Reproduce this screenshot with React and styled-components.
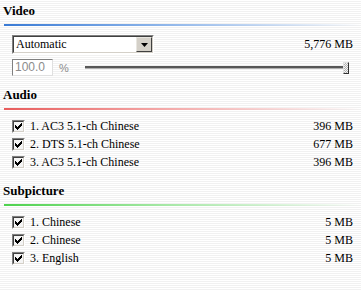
import React from "react";
import styled, { createGlobalStyle } from "styled-components";

const Global = createGlobalStyle`
  html, body { margin: 0; padding: 0; }
  body {
    background: #fff;
  }
`;

const SERIF = `"Liberation Serif", "Times New Roman", serif`;

const Page = styled.div`
  width: 361px;
  height: 290px;
  box-sizing: border-box;
  overflow: hidden;
  font-family: ${SERIF};
  background: repeating-linear-gradient(
    to bottom,
    #ffffff 0px,
    #ffffff 1px,
    #f1f1f1 1px,
    #f1f1f1 2px
  );
  display: flex;
  flex-direction: column;
`;

const Section = styled.section`
  display: flex;
  flex-direction: column;
  height: ${(p) => p.$h}px;
`;

const Header = styled.div`
  height: 27px;
  padding-left: 3px;
  box-sizing: border-box;
  display: flex;
  flex-direction: column;
  justify-content: space-between;
`;

const Title = styled.h2`
  margin: 0;
  padding-top: 3px;
  font-size: 13px;
  line-height: 16px;
  font-weight: bold;
  color: #000;
  font-family: ${SERIF};
`;

const Rule = styled.div`
  height: 2px;
  margin-left: 1px;
  margin-bottom: 1px;
  background: linear-gradient(to right, ${(p) => p.$c} 0%, ${(p) => p.$c2} 45%, rgba(255,255,255,0) 100%);
`;

const Body = styled.div`
  display: flex;
  flex-direction: column;
  padding: ${(p) => p.$pt}px 8px 0 12px;
`;

const Row = styled.div`
  display: flex;
  align-items: center;
  height: ${(p) => p.$h || 18}px;
  margin-top: ${(p) => p.$mt || 0}px;
  font-family: ${SERIF};
  font-size: 12px;
  color: #000;
`;

const Select = styled.div`
  width: 142px;
  height: 19px;
  box-sizing: border-box;
  border: 1px solid;
  border-color: #808080 #ffffff #ffffff #808080;
  display: flex;
`;

const SelectInner = styled.div`
  flex: 1;
  display: flex;
  border: 1px solid;
  border-color: #404040 #d4d0c8 #d4d0c8 #404040;
  background: #fff;
`;

const SelectText = styled.span`
  flex: 1;
  padding-left: 2px;
  font-family: ${SERIF};
  font-size: 12px;
  line-height: 15px;
`;

const ArrowBtn = styled.div`
  width: 16px;
  box-sizing: border-box;
  background: #d4d0c8;
  border: 1px solid;
  border-color: #e8e6e0 #404040 #404040 #e8e6e0;
  display: flex;
  align-items: center;
  justify-content: center;
`;

const Size = styled.span`
  margin-left: auto;
  font-family: ${SERIF};
  font-size: 12px;
`;

const NumInput = styled.div`
  width: 41px;
  height: 17px;
  box-sizing: border-box;
  border: 1px solid;
  border-color: #808080 #e0e0e0 #e0e0e0 #808080;
  background: #fff;
  color: #8c8c8c;
  font-family: "Liberation Sans", Arial, sans-serif;
  font-size: 12px;
  line-height: 15px;
  padding-left: 2px;
`;

const Percent = styled.span`
  margin-left: 6px;
  color: #8c8c8c;
  font-family: "Liberation Sans", Arial, sans-serif;
  font-size: 11px;
`;

const Slider = styled.div`
  position: relative;
  margin-left: 16px;
  width: 264px;
  height: 14px;
  display: flex;
  align-items: center;
`;

const Track = styled.div`
  flex: 1;
  margin-right: 3px;
  height: 2px;
  background: #585858;
  border-bottom: 1px solid #b0b0b0;
`;

const Thumb = styled.div`
  position: absolute;
  right: 0;
  top: 1px;
  width: 6px;
  height: 12px;
  box-sizing: border-box;
  border: 1px solid;
  border-color: #e0e0e0 #303030 #303030 #e0e0e0;
  background: repeating-conic-gradient(#b0b0b0 0 25%, #f4f4f4 0 50%) 0 0 / 2px 2px;
`;

const Check = styled.span`
  width: 13px;
  height: 13px;
  box-sizing: border-box;
  border: 1px solid;
  border-color: #808080 #ffffff #ffffff #808080;
  display: inline-flex;
  margin-right: 5px;
  flex: none;
`;

const CheckInner = styled.span`
  flex: 1;
  border: 1px solid;
  border-color: #404040 #d4d0c8 #d4d0c8 #404040;
  background: #f4f4f4;
  display: flex;
  align-items: center;
  justify-content: center;
`;

const Label = styled.span`
  font-family: ${SERIF};
  font-size: 12px;
`;

const CheckMark = () => (
  <svg width="7" height="7" viewBox="0 0 7 7" shapeRendering="crispEdges">
    <path d="M0 2 L2 4 L7 -1 L7 2 L2 7 L0 5 Z" fill="#000" />
  </svg>
);

const Item = ({ label, size }) => (
  <Row>
    <Check>
      <CheckInner>
        <CheckMark />
      </CheckInner>
    </Check>
    <Label>{label}</Label>
    <Size>{size}</Size>
  </Row>
);

export default function App() {
  return (
    <>
      <Global />
      <Page>
        <Section $h={84}>
          <Header>
            <Title>Video</Title>
            <Rule $c="#3a7bd5" $c2="#8fb6ea" />
          </Header>
          <Body $pt={8}>
            <Row $h={19}>
              <Select>
                <SelectInner>
                  <SelectText>Automatic</SelectText>
                  <ArrowBtn>
                    <svg width="7" height="4" viewBox="0 0 7 4">
                      <path d="M0 0 H7 L3.5 4 Z" fill="#000" />
                    </svg>
                  </ArrowBtn>
                </SelectInner>
              </Select>
              <Size>5,776 MB</Size>
            </Row>
            <Row $h={17} $mt={5}>
              <NumInput>100.0</NumInput>
              <Percent>%</Percent>
              <Slider>
                <Track />
                <Thumb />
              </Slider>
            </Row>
          </Body>
        </Section>
        <Section $h={96}>
          <Header>
            <Title>Audio</Title>
            <Rule $c="#e85c5c" $c2="#f4a9a9" />
          </Header>
          <Body $pt={6}>
            <Item label="1. AC3 5.1-ch Chinese" size="396 MB" />
            <Item label="2. DTS 5.1-ch Chinese" size="677 MB" />
            <Item label="3. AC3 5.1-ch Chinese" size="396 MB" />
          </Body>
        </Section>
        <Section $h={110}>
          <Header>
            <Title>Subpicture</Title>
            <Rule $c="#4ed24e" $c2="#a6e8a6" />
          </Header>
          <Body $pt={6}>
            <Item label="1. Chinese" size="5 MB" />
            <Item label="2. Chinese" size="5 MB" />
            <Item label="3. English" size="5 MB" />
          </Body>
        </Section>
      </Page>
    </>
  );
}
